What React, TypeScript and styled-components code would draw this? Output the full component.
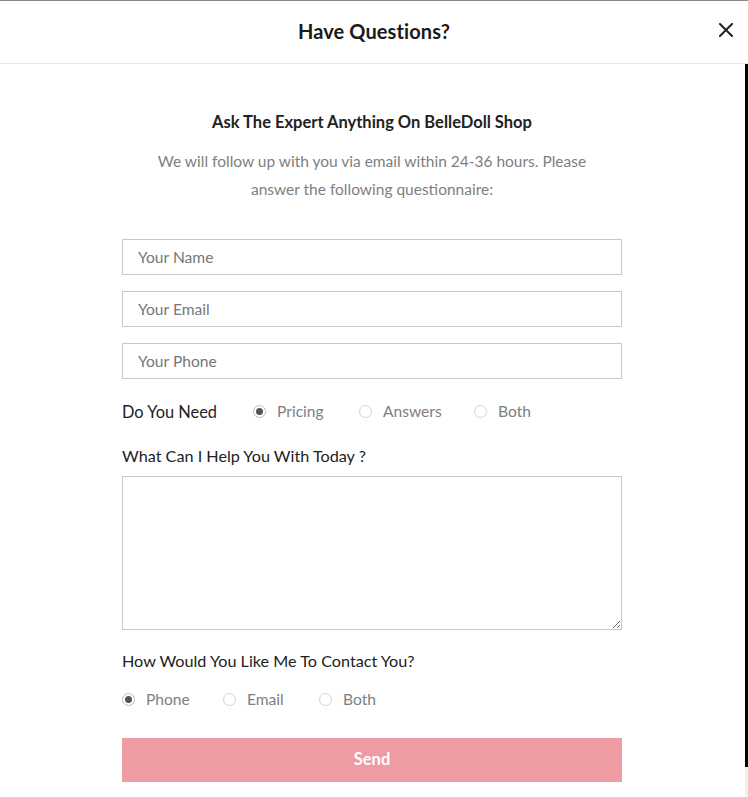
import React from "react";
import styled, { createGlobalStyle } from "styled-components";

const Global = createGlobalStyle`
  html, body { margin: 0; padding: 0; background: #fff; }
  body { font-family: Lato, "Open Sans", sans-serif; }
  * { box-sizing: border-box; }
`;

const Modal = styled.div`
  width: 748px;
  height: 797px;
  display: flex;
  flex-direction: column;
  background: #fff;
  overflow: hidden;
`;

const Header = styled.header`
  height: 64px;
  flex: none;
  display: flex;
  align-items: center;
  justify-content: center;
  position: relative;
  padding-bottom: 3px;
  border-top: 1px solid #8a8a8a;
  border-bottom: 1px solid #e6e6e6;
`;

const Title = styled.h2`
  margin: 0;
  font-size: 20px;
  font-weight: 700;
  color: #1a1a1a;
  letter-spacing: 0.1px;
`;

const Close = styled.button`
  position: absolute;
  right: 14px;
  top: 21px;
  width: 16px;
  height: 16px;
  padding: 0;
  border: 0;
  background: none;
  display: flex;
  align-items: center;
  justify-content: center;
`;

const BodyWrap = styled.div`
  flex: 1;
  display: flex;
  min-height: 0;
`;

const Body = styled.div`
  flex: 1;
  overflow: hidden;
  padding-right: 1px;
`;

const ScrollTrack = styled.div`
  width: 3px;
  flex: none;
  display: flex;
  flex-direction: column;
  background: #f1f1f1;
`;

const ScrollThumb = styled.div`
  height: 703px;
  background: #000;
`;

const Content = styled.div`
  width: 500px;
  margin: 0 auto;
  padding: 48px 0 46px;
  display: flex;
  flex-direction: column;
`;

const Subtitle = styled.h3`
  margin: 0;
  text-align: center;
  font-size: 16.5px;
  line-height: 20px;
  font-weight: 700;
  color: #222;
`;

const Intro = styled.p`
  margin: 15px auto 0;
  width: 460px;
  text-align: center;
  font-size: 15.5px;
  line-height: 28px;
  color: #808080;
`;

const Fields = styled.div`
  margin-top: 36px;
  display: flex;
  flex-direction: column;
  gap: 16px;
`;

const Input = styled.input`
  width: 500px;
  height: 36px;
  border: 1px solid #c9c9c9;
  padding: 0 15px;
  font-family: inherit;
  font-size: 15.6px;
  color: #333;
  outline: none;
  &::placeholder { color: #777; }
`;

const RadioRow = styled.div<{ $mt: number }>`
  margin-top: ${(p) => p.$mt}px;
  height: 20px;
  display: flex;
  align-items: center;
`;

const RowLabel = styled.span`
  font-size: 16.4px;
  color: #222;
  width: 131px;
`;

const Option = styled.label<{ $w: number }>`
  display: flex;
  align-items: center;
  width: ${(p) => p.$w}px;
  font-size: 15.6px;
  color: #808080;
`;

const Dot = styled.span<{ $on?: boolean }>`
  width: 13px;
  height: 13px;
  border-radius: 50%;
  border: 1px solid ${(p) => (p.$on ? "#bdbdbd" : "#d4d4d4")};
  margin-right: 11px;
  display: flex;
  align-items: center;
  justify-content: center;
  &::after {
    content: "";
    width: 7px;
    height: 7px;
    border-radius: 50%;
    background: ${(p) => (p.$on ? "#555" : "transparent")};
  }
`;

const Question = styled.div<{ $mt: number }>`
  margin-top: ${(p) => p.$mt}px;
  font-size: 16.2px;
  line-height: 20px;
  color: #222;
`;

const TextArea = styled.textarea`
  display: block;
  margin-top: 10px;
  width: 500px;
  height: 154px;
  border: 1px solid #c9c9c9;
  font-family: inherit;
  font-size: 15px;
  padding: 10px 15px;
  outline: none;
  resize: vertical;
`;

const Send = styled.button`
  margin-top: 29px;
  height: 44px;
  width: 500px;
  border: 0;
  padding: 0 0 3px;
  background: #ee9ba4;
  color: #fff;
  font-family: inherit;
  font-size: 16.5px;
  font-weight: 700;
`;

export default function App() {
  return (
    <Modal>
      <Global />
      <Header>
        <Title>Have Questions?</Title>
        <Close aria-label="Close">
          <svg width="14" height="14" viewBox="0 0 14 14">
            <path d="M1 1L13 13M13 1L1 13" stroke="#222" strokeWidth="2" strokeLinecap="square" />
          </svg>
        </Close>
      </Header>
      <BodyWrap>
        <Body>
          <Content>
            <Subtitle>Ask The Expert Anything On BelleDoll Shop</Subtitle>
            <Intro>
              We will follow up with you via email within 24-36 hours. Please answer the following questionnaire:
            </Intro>
            <Fields>
              <Input placeholder="Your Name" />
              <Input placeholder="Your Email" />
              <Input placeholder="Your Phone" />
            </Fields>
            <RadioRow $mt={22}>
              <RowLabel>Do You Need</RowLabel>
              <Option $w={106}><Dot $on />Pricing</Option>
              <Option $w={115}><Dot />Answers</Option>
              <Option $w={60}><Dot />Both</Option>
            </RadioRow>
            <Question $mt={25}>What Can I Help You With Today ?</Question>
            <TextArea />
            <Question $mt={21}>How Would You Like Me To Contact You?</Question>
            <RadioRow $mt={18}>
              <Option $w={101}><Dot $on />Phone</Option>
              <Option $w={96}><Dot />Email</Option>
              <Option $w={60}><Dot />Both</Option>
            </RadioRow>
            <Send>Send</Send>
          </Content>
        </Body>
        <ScrollTrack>
          <ScrollThumb />
        </ScrollTrack>
      </BodyWrap>
    </Modal>
  );
}
